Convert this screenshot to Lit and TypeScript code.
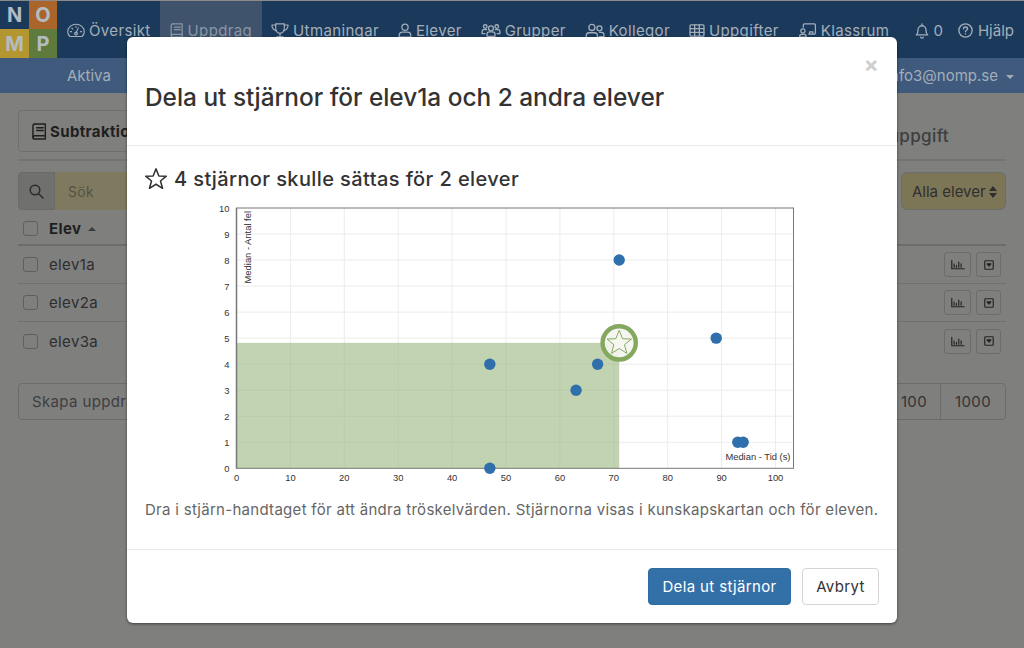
import { LitElement, html, css, svg } from "lit";
import { customElement } from "lit/decorators.js";

const I = (w: number, h: number, vb: string, body: unknown, cls = "ic") =>
  html`<svg class=${cls} width=${w} height=${h} viewBox=${vb} fill="none" stroke="currentColor" stroke-width="1.5" stroke-linecap="round" stroke-linejoin="round">${body}</svg>`;

const book = (w = 14, h = 15) => I(w, h, "0 0 16 18", svg`<path d="M3.2 1h11v12.6h-11c-1.2 0-2.2.9-2.2 1.7s1 1.7 2.2 1.7h11v-3.4"/><path d="M1 15.3V3.2C1 2 2 1 3.2 1"/><path d="M5 5h7M5 8h7"/>`);
const gauge = I(18, 15, "0 0 24 19", svg`<path d="M4 17.5C2.2 15.8 1 13.5 1 11 1 5.5 6 1.2 12 1.2S23 5.500 23 11c0 2.500-1.200 4.800-3 6.500z"/><path d="M12 13l3-7"/><circle cx="12" cy="13.500" r="1.800"/><path d="M4.500 11h1.500M6.500 6.500l1 1M12 3.800v1.400M18 11h1.500"/>`);
const trophy = I(18, 15, "0 0 23 19", svg`<path d="M6 1h11v6c0 3.500-2.500 6-5.500 6S6 10.500 6 7z"/><path d="M6 2.500H1.200c0 4 1.800 6.500 6 7.500M17 2.500h4.800c0 4-1.800 6.500-6 7.500"/><path d="M11.500 13v3M7.500 17.500h8"/>`);
const person = I(14, 15, "0 0 17 18", svg`<circle cx="8.500" cy="5" r="3.800"/><path d="M1.500 17v-2.200c0-2.400 2-3.800 4-3.800h6c2 0 4 1.400 4 3.800V17z"/>`);
const group = I(20, 16, "0 0 22 18", svg`<circle cx="11" cy="6" r="2.800"/><circle cx="4.500" cy="4" r="2"/><circle cx="17.500" cy="4" r="2"/><path d="M6.500 15v-2.500c0-1.500 1-2.500 2.500-2.500h4c1.500 0 2.500 1 2.500 2.500V15zM4 12H1v-2.500C1 8.500 2 7.500 3 7.500h3M18 12h3V9.500c0-1-1-2-2-2h-3"/>`);
const colleagues = I(20, 16, "0 0 22 18", svg`<circle cx="7.500" cy="5" r="3.400"/><circle cx="16" cy="6" r="2.800"/><path d="M1.200 16.500v-2.300c0-2 1.500-3.200 3-3.200h6.500c1.600 0 3 1.200 3 3.200v2.300zM16 10.500h2.500c1.300 0 2.500 1 2.500 2.500v2.500h-5"/>`);
const table = I(16, 13, "0 0 18 15", svg`<rect x="1" y="1" width="16" height="13" rx="1"/><path d="M1 5.300h16M1 9.700h16M6.300 1v13M11.700 1v13"/>`);
const classroom = I(19, 15, "0 0 21 18", svg`<circle cx="5" cy="9.500" r="2.500"/><path d="M1 17v-.8c0-1.500 1-2.700 2.500-2.700h3c1.500 0 2.500 1.200 2.500 2.700v.8zM5.500 5V2.200C5.500 1.500 6 1 6.700 1h12.100c.7 0 1.200.5 1.200 1.200V12c0 .7-.5 1.200-1.200 1.200H12M13 13v-2.500h4V13"/>`);
const bell = I(14, 16, "0 0 16 18", svg`<path d="M1.500 13.500c1-1 2-2 2-6 0-2.500 2-4.500 4.500-4.500s4.500 2 4.500 4.500c0 4 1 5 2 6zM8 1v2M6.500 16c.2.800.8 1.200 1.500 1.200s1.300-.4 1.500-1.200"/>`);
const help = I(15, 15, "0 0 17 17", svg`<circle cx="8.500" cy="8.500" r="7.500"/><path d="M6.300 6.500c0-1.200 1-2 2.200-2s2.300.8 2.300 2c0 1.800-2.300 1.700-2.300 3.500"/><path d="M8.500 12.300v.2"/>`);
const search = I(15, 15, "0 0 15 15", svg`<circle cx="6" cy="6" r="4.800"/><path d="M9.700 9.700L14 14"/>`);
const bars = I(14, 11, "0 0 18 13", svg`<path d="M1 1v11h16M4 10V6M7 10V7.500M10 10V3.500M13 10V5.500"/>`);
const dropSq = I(10, 10, "0 0 13 13", svg`<rect x="1" y="1" width="11" height="11" rx="1"/><path d="M4 5h5L6.500 8z" fill="currentColor"/>`);
const STAR = "M0 -12.500L3.400 -4.100 12.200 -3.800 5.300 1.900 7.700 10.500 0 5.700 -7.700 10.500 -5.300 1.900 -12.200 -3.800 -3.400 -4.100z";

const X0 = 236.5, XS = 5.39, Y0 = 468.3, YS = 26.03, RIGHT = 793.5, TOP = 208;
const px = (v: number) => X0 + v * XS;
const py = (v: number) => Y0 - v * YS;
const ticksX = [0, 10, 20, 30, 40, 50, 60, 70, 80, 90, 100];
const ticksY = [0, 1, 2, 3, 4, 5, 6, 7, 8, 9, 10];
const pts: [number, number][] = [[47, 4], [47, 0], [63, 3], [67, 4], [71, 8], [89, 5], [93, 1], [94, 1]];

function chart() {
  const ox = 200, oy = 200;
  const X = (v: number) => px(v) - ox, Y = (v: number) => py(v) - oy;
  return html`<svg class="chart" width="620" height="290" viewBox="0 0 620 290">
    ${svg`
      <g stroke="#ececec" stroke-width="1">
        ${ticksX.slice(1).map((t) => svg`<line x1=${X(t)} x2=${X(t)} y1=${TOP - oy} y2=${Y0 - oy}/>`)}
        ${ticksY.slice(1, 10).map((t) => svg`<line x1=${X0 - ox} x2=${RIGHT - ox} y1=${Y(t)} y2=${Y(t)}/>`)}
      </g>
      <rect x=${X0 - ox} y=${Y(4.82)} width=${X(71) - (X0 - ox)} height=${Y0 - oy - Y(4.82)} fill="#97b67b" fill-opacity=".6"/>
      <rect x=${X0 - ox} y=${TOP - oy} width=${RIGHT - X0} height=${Y0 - TOP} fill="none" stroke="#777" stroke-width="1"/>
      <line x1=${X0 - ox} x2=${X0 - ox} y1=${TOP - oy} y2=${Y0 - oy} stroke="#777" stroke-width="1.500"/>
      ${pts.map(([a, b]) => svg`<circle cx=${X(a)} cy=${Y(b)} r="5.700" fill="#2f6fab"/>`)}
      <g class="tick">
        ${ticksX.map((t) => svg`<text x=${X(t)} y=${Y0 - oy + 13} text-anchor="middle">${t}</text>`)}
        ${ticksY.map((t) => svg`<text x=${X0 - ox - 7} y=${Y(t) + 3.500} text-anchor="end">${t}</text>`)}
        <text x=${RIGHT - ox - 3} y=${Y0 - oy - 8} text-anchor="end">Median - Tid (s)</text>
        <text transform="translate(${X0 - ox + 14} ${TOP - oy + 3}) rotate(-90)" text-anchor="end">Median - Antal fel</text>
      </g>
      <g transform="translate(${X(71)} ${Y(4.82)})">
        <circle r="16.600" fill="#f5f5f0" fill-opacity=".9" stroke="#84a85e" stroke-width="4.400"/>
        <path d=${STAR} fill="#f7f7f2" stroke="#84a85e" stroke-width="1"/>
      </g>
    `}
  </svg>`;
}

@customElement("app-root")
export class AppRoot extends LitElement {
  static styles = css`
    :host { display: block; width: 1024px; height: 648px; overflow: hidden; position: relative; background: #7f7f7e;
      font-family: Inter, "Liberation Sans", Arial, sans-serif; color: #2b2b2b; font-size: 15px; letter-spacing: .36px; }
    svg { display: block; }
    .nav { display: flex; height: 58px; box-sizing: border-box; border-top: 1px solid #8a8a8a; background: #1b3a5b; color: #a4aeb9; align-items: stretch; }
    .logo { display: grid; grid-template-columns: 29px 28px; grid-template-rows: 28px 29px; font-weight: 700; font-size: 20px; color: #b4bcc2; letter-spacing: 0; }
    .logo span { display: flex; align-items: center; justify-content: center; }
    .n { background: #1b3a5b; } .o { background: #a9652a; } .m { background: #b3962f; } .p { background: #5e7a3c; }
    .items { display: flex; flex: 1; align-items: stretch; padding: 0 10px 0 10px; }
    .item { display: flex; align-items: center; gap: 4px; padding: 2px 9.500px 0; white-space: nowrap; }
    .item.on { background: #3f536d; color: #8a96a4; }
    .item.first { padding-left: 0; }
    .item.tight { padding: 2px 7.500px 0; gap: 5px; letter-spacing: 0; }
    .item.end { padding-right: 0; }
    .spacer { flex: 1; }
    .sub { display: flex; justify-content: space-between; align-items: center; height: 35px; background: #3f5a7c; color: #a3aebb; padding: 0 10px 0 67px; letter-spacing: 0; }
    .caret { display: inline-block; border: 4px solid transparent; border-top-color: #a3aebb; border-bottom: 0; margin-left: 8px; vertical-align: 2px; }
    .page { padding: 17px 18px 0; }
    .head { display: flex; justify-content: space-between; align-items: flex-start; border-bottom: 2px solid #747473; height: 51px; box-sizing: border-box; }
    .tabbtn { display: flex; align-items: center; gap: 3px; border: 1px solid #6f6f6e; border-radius: 4px; width: 300px; height: 42px; padding-left: 13px; box-sizing: border-box; font-weight: 700; color: #1f1f1f; }
    .tabr { font-size: 17px; font-weight: 500; color: #3e3e3e; padding: 16px 57px 0 0; }
    .filter { display: flex; justify-content: space-between; align-items: center; margin-top: 11px; height: 38px; }
    .group { display: flex; height: 38px; }
    .addon { width: 37px; background: #70706f; border: 1px solid #6a6a69; border-radius: 4px 0 0 4px; display: flex; align-items: center; justify-content: center; box-sizing: border-box; color: #2b2b2b; }
    .input { width: 300px; background: #7f7a5f; padding: 0 13px; display: flex; align-items: center; color: #55533f; font-size: 14px; }
    .sel { display: flex; align-items: center; gap: 3px; width: 105px; height: 38px; box-sizing: border-box; padding: 1px 0 0 10px; background: #7c7656; border: 1px solid #6c6c6a; border-radius: 6px; color: #2f2f2f; letter-spacing: 0; }
    .updown { display: flex; flex-direction: column; gap: 2px; }
    .updown i { display: block; border: 4px solid transparent; }
    .updown i:first-child { border-bottom: 5px solid #2f2f2f; border-top: 0; }
    .updown i:last-child { border-top: 5px solid #2f2f2f; border-bottom: 0; }
    .rows { margin-top: 3px; }
    .row { display: flex; align-items: center; height: 38px; border-bottom: 1px solid #707070; box-sizing: border-box; color: #2e2e2e; padding-left: 5px; }
    .row.h { height: 33px; border-bottom-width: 2px; border-color: #6c6c6b; font-weight: 700; color: #1f1f1f; }
    .row.last { border-bottom: 0; }
    .cb { width: 13px; height: 13px; border: 1px solid #5f5f5e; border-radius: 3px; margin-right: 11px; background: #7f7f7e; }
    .up { display: inline-block; border: 4px solid transparent; border-bottom-color: #3b3b3b; border-top: 0; margin-left: 7px; }
    .row .grow { flex: 1; }
    .mini { width: 27px; height: 25px; border: 1px solid #6c6c6b; border-radius: 3px; display: flex; align-items: center; justify-content: center; box-sizing: border-box; color: #242424; margin-left: 5px; }
    .mini.sq { width: 25px; margin-right: 5px; }
    .bottom { display: flex; justify-content: space-between; margin-top: 23px; height: 37px; }
    .b1 { border: 1px solid #6c6c6b; border-radius: 4px; width: 300px; display: flex; align-items: center; padding-left: 13px; box-sizing: border-box; color: #3e3e3e; }
    .pager { display: flex; border: 1px solid #6c6c6b; border-radius: 4px; width: 120px; box-sizing: border-box; color: #333; }
    .pager span { display: flex; align-items: center; justify-content: center; }
    .pager span:first-child { width: 54px; border-right: 1px solid #6c6c6b; justify-content: flex-end; padding-right: 13px; box-sizing: border-box; }
    .pager span:last-child { flex: 1; }

    .modal { position: absolute; left: 127px; top: 37px; width: 770px; height: 586px; box-sizing: border-box; background: #fff; border-radius: 6px;
      box-shadow: 0 1px 3px rgba(0,0,0,.5); display: flex; flex-direction: column; color: #333; }
    .mh { height: 109px; box-sizing: border-box; padding: 0 18px; border-bottom: 1px solid #e9e9e9; position: relative; display: flex; align-items: center; }
    h1 { margin: 14px 0 0; font-size: 24.400px; font-weight: 500; line-height: 1.2; color: #333; letter-spacing: 0; }
    .close { position: absolute; right: 18px; top: 15px; font-size: 22px; line-height: 24px; font-weight: 700; color: #cfcfcf; }
    .mb { flex: 1; padding: 20px 18px 0; box-sizing: border-box; }
    h2 { display: flex; align-items: center; gap: 7px; margin: 0; font-size: 20px; font-weight: 500; line-height: 26px; color: #333; letter-spacing: .4px; }
    .chart { margin: 8px 0 0 55px; display: block; }
    .tick text { font-size: 9.400px; fill: #333; font-family: "Liberation Sans", Arial, sans-serif; letter-spacing: 0; }
    .hint { margin: 10px 0 0; font-size: 15px; line-height: 20px; color: #666; white-space: nowrap; letter-spacing: .29px; }
    .mf { height: 74px; box-sizing: border-box; border-top: 1px solid #e9e9e9; padding: 18px; display: flex; justify-content: flex-end; gap: 11px; }
    .btn { display: flex; align-items: center; justify-content: center; height: 37px; border-radius: 4px; box-sizing: border-box; letter-spacing: .37px; }
    .btn.pri { width: 143px; background: #3470a8; color: #fff; border: 1px solid #2e6da4; }
    .btn.sec { width: 77px; background: #fff; color: #333; border: 1px solid #d5d5d5; }
  `;

  render() {
    const nav: [unknown, string][] = [
      [gauge, "Översikt"], [book(), "Uppdrag"], [trophy, "Utmaningar"], [person, "Elever"],
      [group, "Grupper"], [colleagues, "Kollegor"], [table, "Uppgifter"], [classroom, "Klassrum"],
    ];
    return html`
      <div class="nav">
        <div class="logo"><span class="n">N</span><span class="o">O</span><span class="m">M</span><span class="p">P</span></div>
        <div class="items">
          ${nav.map(([ic, t], i) => html`<div class="item ${i === 1 ? "on" : ""} ${i === 0 ? "first" : ""}">${ic}<span>${t}</span></div>`)}
          <div class="spacer"></div>
          <div class="item tight">${bell}<span>0</span></div>
          <div class="item tight end">${help}<span>Hjälp</span></div>
        </div>
      </div>
      <div class="sub"><span>Aktiva</span><span>info3@nomp.se<i class="caret"></i></span></div>
      <div class="page">
        <div class="head">
          <div class="tabbtn">${book(15, 17)}<span>Subtraktion</span></div>
          <div class="tabr">Ny uppgift</div>
        </div>
        <div class="filter">
          <div class="group"><div class="addon">${search}</div><div class="input">Sök</div></div>
          <div class="sel"><span>Alla elever</span><span class="updown"><i></i><i></i></span></div>
        </div>
        <div class="rows">
          <div class="row h"><span class="cb"></span><span>Elev</span><i class="up"></i></div>
          ${["elev1a", "elev2a", "elev3a"].map((e, i) => html`
            <div class="row ${i === 2 ? "last" : ""}"><span class="cb"></span><span class="grow">${e}</span>
              <span class="mini">${bars}</span><span class="mini sq">${dropSq}</span></div>`)}
        </div>
        <div class="bottom">
          <div class="b1">Skapa uppdrag</div>
          <div class="pager"><span>100</span><span>1000</span></div>
        </div>
      </div>
      <div class="modal">
        <div class="mh"><h1>Dela ut stjärnor för elev1a och 2 andra elever</h1><div class="close">×</div></div>
        <div class="mb">
          <h2>${I(22, 22, "-13 -13.500 26 26", svg`<path d=${STAR} stroke-width="1.800"/>`)}<span>4 stjärnor skulle sättas för 2 elever</span></h2>
          ${chart()}
          <p class="hint">Dra i stjärn-handtaget för att ändra tröskelvärden. Stjärnorna visas i kunskapskartan och för eleven.</p>
        </div>
        <div class="mf"><div class="btn pri">Dela ut stjärnor</div><div class="btn sec">Avbryt</div></div>
      </div>
    `;
  }
}
